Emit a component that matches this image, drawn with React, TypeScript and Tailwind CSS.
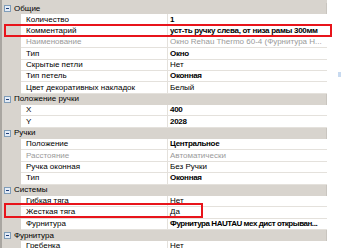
type Row = {
	label: string
	value: string
	bold?: boolean
	disabled?: boolean
	tight?: boolean
	mark?: 'wide' | 'short'
}

type Group = {
	title: string
	rows: Row[]
}

const groups: Group[] = [
	{
		title: 'Общие',
		rows: [
			{ label: 'Количество', value: '1', bold: true },
			{ label: 'Комментарий', value: 'уст-ть ручку слева, от низа рамы 300мм', bold: true, mark: 'wide' },
			{ label: 'Наименование', value: 'Окно Rehau Thermo 60-4 (Фурнитура Н...', disabled: true },
			{ label: 'Тип', value: 'Окно', bold: true },
			{ label: 'Скрытые петли', value: 'Нет' },
			{ label: 'Тип петель', value: 'Оконная', bold: true },
			{ label: 'Цвет декоративных накладок', value: 'Белый' }
		]
	},
	{
		title: 'Положение ручки',
		rows: [
			{ label: 'X', value: '400', bold: true },
			{ label: 'Y', value: '2028', bold: true }
		]
	},
	{
		title: 'Ручки',
		rows: [
			{ label: 'Положение', value: 'Центральное', bold: true },
			{ label: 'Расстояние', value: 'Автоматически', disabled: true },
			{ label: 'Ручка оконная', value: 'Без Ручки' },
			{ label: 'Тип', value: 'Оконная', bold: true }
		]
	},
	{
		title: 'Системы',
		rows: [
			{ label: 'Гибкая тяга', value: 'Нет' },
			{ label: 'Жесткая тяга', value: 'Да', mark: 'short' },
			{ label: 'Фурнитура', value: 'Фурнитура HAUTAU мех дист открыван...', bold: true, tight: true }
		]
	},
	{
		title: 'Фурнитура',
		rows: [{ label: 'Гребенка', value: 'Нет' }]
	}
]

const MinusBox = () => (
	<span className="flex items-center justify-center w-[7px] h-[7px] border border-[#7f9db9] bg-[#e4ecf7] mr-[3px]">
		<span className="block w-[3px] h-[1px] bg-[#1f3f7a]" />
	</span>
)

const PropRow = ({ row }: { row: Row }) => (
	<div className="relative flex h-[11.35px]">
		<div className="w-[19px] shrink-0 bg-[#d8d4ce]" />
		<div className={`w-[147px] shrink-0 flex items-center pl-[5px] border-b border-r border-[#e4e1dc] whitespace-nowrap overflow-hidden ${row.disabled ? 'text-[#9a9a9a]' : 'text-black'}`}>
			{row.label}
		</div>
		<div className={`flex-1 flex items-center pl-[2px] border-b border-[#e4e1dc] whitespace-nowrap overflow-hidden ${row.disabled ? 'text-[#9a9a9a]' : 'text-black'} ${row.bold ? 'font-bold' : ''} ${row.tight ? 'tracking-[-0.45px]' : row.bold ? 'tracking-[-0.3px]' : ''}`}>
			{row.value}
		</div>
		{row.mark === 'wide' ? <div className="absolute left-[2px] top-[-2px] w-[328px] h-[13px] border-[2px] border-[#e8141b]" /> : ''}
		{row.mark === 'short' ? <div className="absolute left-[2px] top-[-4px] w-[199px] h-[15px] border-[2px] border-[#e8141b]" /> : ''}
	</div>
)

const App = () => {
	return (
		<div className="relative w-[342px] h-[248px] overflow-hidden bg-white text-[8px] leading-none" style={{ fontFamily: '"Liberation Sans", Arial, sans-serif' }}>
			<div className="relative w-[327px] pt-[3px] border-l-[2px] border-[#a9a6a1] bg-[#d8d4ce]">
				{groups.map(group => (
					<div key={group.title}>
						<div className="flex items-center h-[11.35px] pl-[2px] bg-[#d8d4ce] border-r border-[#c9c5bf]">
							<MinusBox />
							<span>{group.title}</span>
						</div>
						<div className="bg-white">
							{group.rows.map(row => <PropRow key={group.title + row.label} row={row} />)}
						</div>
					</div>
				))}
			</div>
			<div className="absolute left-[338px] top-[72px] w-[3px] h-[5px] bg-[#c8daf0]" />
		</div>
	)
}

export default App
